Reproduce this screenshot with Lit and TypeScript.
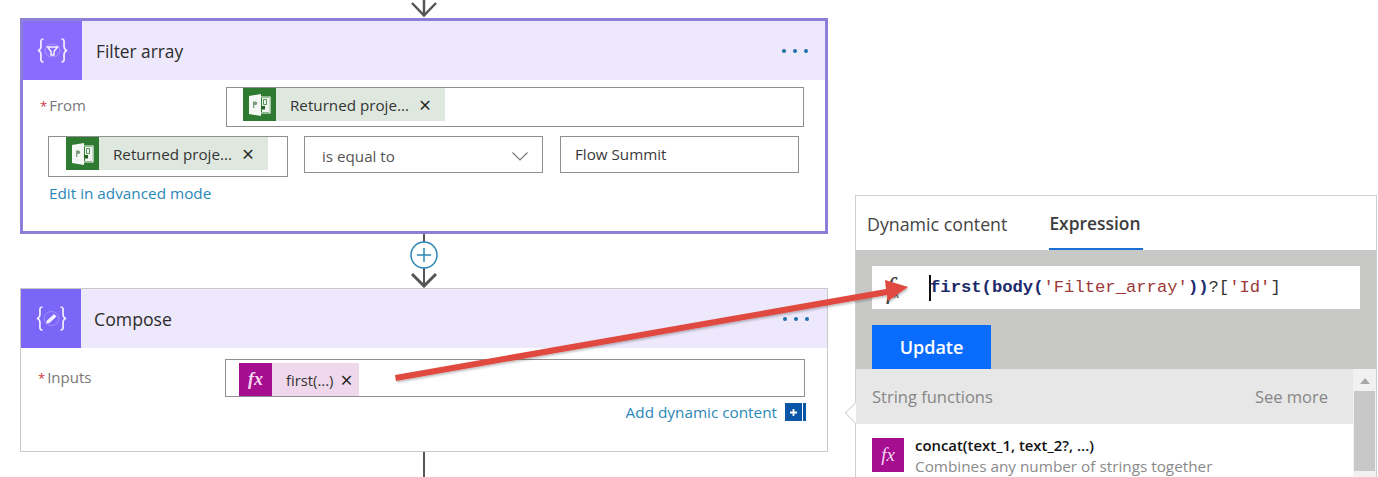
import { LitElement, html, css, svg } from "lit";
import { customElement } from "lit/decorators.js";

const braces = (inner: unknown) => html`<svg viewBox="0 0 31 25" width="31" height="25" fill="none" stroke="#f4f0ff" stroke-width="1.700">
  <path d="M6.500 1 C3 1 4 4 4 7.500 C4 10.500 3.500 12 1 12.500 C3.500 13 4 14.500 4 17.500 C4 21 3 24 6.500 24"/>
  <path d="M24.500 1 C28 1 27 4 27 7.500 C27 10.500 27.500 12 30 12.500 C27.500 13 27 14.500 27 17.500 C27 21 28 24 24.500 24"/>
  ${inner}
</svg>`;

const projectIcon = html`<svg viewBox="0 0 24 22" width="24" height="22">
  <path d="M1 2 L13 0 V22 L1 20 Z" fill="#f4f7f3"/>
  <path d="M13 3 H22 V19 H13" fill="#2f7a31" stroke="#f4f7f3" stroke-width="1.200"/>
  <rect x="14" y="4" width="7.500" height="14" fill="#eef3ee"/>
  <path d="M5 7.500 h2.500 a1.700 1.700 0 0 1 0 3.600 h-1.200 v3 h-1.300z" fill="#7f9a80"/>
  <path d="M15.500 5.500 h3 v5 h-3z" fill="#eef3ee" stroke="#2f7a31" stroke-width=".8"/>
  <rect x="13.500" y="12" width="3.500" height="3.500" fill="#24612a"/>
</svg>`;

@customElement("app-root")
export class AppRoot extends LitElement {
  static styles = css`
    :host {
      display: block;
      position: relative;
      width: 1378px;
      height: 477px;
      overflow: hidden;
      background: #fff;
      font-family: "Open Sans", "Noto Sans", sans-serif;
      color: #333;
    }
    .page { display: flex; align-items: flex-start; }
    .left { width: 808px; margin-left: 20px; flex: none; }
    .connector { display: block; }
    .card { box-sizing: border-box; background: #fff; width: 808px; }
    .card.filter { height: 216px; border: 3px solid #8c7fd8; }
    .card.compose { height: 164px; border: 1px solid #c9c9c9; }
    .head { display: flex; align-items: center; background: #ede8fc; height: 59px; }
    .head .ic { width: 59px; height: 59px; display: flex; align-items: center; justify-content: center; background: #8a6cff; flex: none; }
    .compose .head .ic { width: 60px; background: #7b66f8; }
    .head .title { margin-left: 14px; flex: 1; font-size: 17.3px; color: #2c2c2c; padding-top: 1px; }
    .compose .head .title { margin-left: 13px; font-size: 17.7px; padding-top: 0; }
    .dots { display: flex; gap: 7px; margin-right: 17px; }
    .compose .dots { margin-right: 18px; }
    .dots i { width: 4px; height: 4px; border-radius: 50%; background: #1f6fa8; }
    .row { display: flex; align-items: flex-start; }
    .label { width: 186px; padding-left: 17px; flex: none; font-size: 15px; line-height: 20px; color: #777; }
    .label b { color: #d0343c; font-weight: 400; font-size: 13px; margin-right: 2px; }
    .filter .r1 { margin-top: 7px; }
    .filter .r1 .label { padding-top: 8px; }
    .filter .r2 { margin-top: 9px; padding-left: 25px; gap: 16px; }
    .compose .r1 { margin-top: 11px; }
    .compose .r1 .label { width: 187px; padding-top: 8px; }
    .box { box-sizing: border-box; border: 1px solid #8f8f8f; background: #fff; display: flex; align-items: flex-start; }
    .from { width: 578px; height: 40px; padding-left: 16px; }
    .left-field { width: 240px; height: 41px; padding-left: 17px; }
    .select, .value { width: 239px; height: 37px; font-size: 15.2px; align-items: center; padding: 0 14px 0 17px; justify-content: space-between; color: #555; }
    .select span { padding-top: 2px; }
    .select svg { margin-top: 4px; }
    .value { margin-left: 1px; padding: 0 14px 2px; color: #3a3a3a; }
    .inputs { width: 580px; height: 38px; padding: 3px 0 0 13px; }
    .token { display: flex; align-items: center; height: 33px; background: #dfe8df; font-size: 15.2px; color: #333; white-space: nowrap; }
    .from .token, .left-field .token { width: 202px; }
    .token .tic { width: 33px; height: 100%; background: #2f7a31; display: flex; align-items: center; justify-content: center; flex: none; }
    .token .txt { margin-left: 14px; }
    .token .x { margin-left: 10px; font-size: 21px; line-height: 1; padding-top: 2px; color: #222; }
    .token.fx { background: #f0d8ec; width: 120px; }
    .token.fx .tic { background: #a50e8f; }
    .token.fx .txt { font-size: 14.8px; margin-left: 14px; }
    .token.fx .x { margin-left: 7px; }
    .fxt { font-family: "Liberation Serif", serif; font-style: italic; font-weight: 700; color: #f7d8f2; font-size: 18px; }
    .ico .fxt { font-weight: 400; font-size: 19px; }
    .link { color: #2b88b8; font-size: 15.3px; line-height: 20px; }
    .filter .link { margin: 6px 0 0 26px; }
    .add { display: flex; justify-content: flex-end; align-items: center; gap: 8px; margin-top: 5px; padding-right: 21px; }
    .plus { display: flex; }
    .plus .main { width: 17px; height: 18px; background: #0b55a8; display: flex; align-items: center; justify-content: center; }
    .plus .bar { width: 3px; height: 18px; margin-left: 1px; background: #0b55a8; }
    .right { margin: 195px 0 0 27px; width: 522px; flex: none; }
    .panel { position: relative; box-sizing: border-box; width: 522px; height: 282px; border: 1px solid #cfcfcf; border-bottom: none; background: #fff; }
    .tabs { display: flex; height: 54px; padding-left: 11px; font-size: 17.8px; color: #444; }
    .tab { display: flex; align-items: center; padding-top: 2px; box-sizing: border-box; height: 54px; }
    .tab.active { margin-left: 42px; font-size: 17.4px; font-weight: 600; color: #3c3c3c; border-bottom: 2px solid #1a6fd4; width: 94px; white-space: nowrap; }
    .editor { position: relative; background: #c8c9c7; height: 119px; padding: 16px 16px 0; box-sizing: border-box; }
    .expr { display: flex; align-items: center; height: 43px; background: #fff; width: 488px; }
    .expr .f { width: 57px; flex: none; padding: 7px 0 0 14px; box-sizing: border-box; font-family: "Liberation Serif", serif; font-style: italic; font-size: 29px; line-height: 30px; color: #444; }
    .expr .f small { font-size: 12px; }
    .code { font-family: "Liberation Mono", monospace; font-size: 17.2px; white-space: pre; color: #333; border-left: 2px solid #111; line-height: 26px; }
    .code b { color: #1b2a6b; margin-left: -1px; }
    .code b + span + b { margin-left: 0; }
    .code span { color: #9c3a3a; }
    .update { margin-top: 16px; width: 119px; height: 44px; box-sizing: border-box; background: #0a6cff; color: #fff; font-weight: 600; font-size: 18px; display: flex; align-items: center; justify-content: center; }
    .listwrap { position: relative; display: flex; }
    .list { flex: 1; min-width: 0; background: #fff; }
    .lhead { display: flex; justify-content: space-between; align-items: center; height: 55px; background: #e6e7e6; padding: 0 25px 0 16px; font-size: 16.5px; color: #868686; }
    .item { display: flex; gap: 11px; padding: 14px 16px 0; }
    .item .ico { width: 32px; height: 34px; background: #a50e8f; display: flex; align-items: center; justify-content: center; flex: none; }
    .item .t { font-size: 14.9px; font-weight: 600; color: #111; line-height: 20px; margin-top: -3px; }
    .item .d { font-size: 15.3px; color: #8a8a8a; line-height: 20px; margin-top: 1px; white-space: nowrap; }
    .scroll { width: 23px; background: #f1f1f1; display: flex; flex-direction: column; align-items: center; height: 108px; flex: none; }
    .scroll .up { width: 0; height: 0; border: 5px solid transparent; border-top: 0; border-bottom: 6px solid #a8a8a8; margin: 9px 0 7px; }
    .scroll .thumb { width: 21px; height: 80px; background: #c8c8c8; }
    .beak { position: absolute; left: -8px; top: 209px; width: 16px; height: 16px; background: #fff; border-left: 1px solid #d4d4d4; border-bottom: 1px solid #d4d4d4; transform: rotate(45deg); box-sizing: border-box; }
    .overlay { position: absolute; left: 0; top: 0; pointer-events: none; }
  `;

  private token(label: string) {
    return html`<div class="token"><div class="tic">${projectIcon}</div><span class="txt">${label}</span><span class="x">×</span></div>`;
  }

  private dots() {
    return html`<div class="dots"><i></i><i></i><i></i></div>`;
  }

  render() {
    const funnel = svg`<ellipse cx="15.500" cy="12.500" rx="7.500" ry="6.500" stroke-width=".6" opacity=".5"/><path d="M10.500 9 H20.500 L17 13.500 V17 L14 17 V13.500 Z" stroke-width="1.500"/>`;
    const pencil = svg`<ellipse cx="15.500" cy="12.500" rx="7.500" ry="7" stroke-width=".6" opacity=".5"/><path d="M10 17.500 L11 14.500 L18 8 L20.500 10.500 L13.500 17 Z" fill="#f4f0ff" stroke="none"/>`;
    return html`
      <div class="page">
        <div class="left">
          <svg class="connector" width="808" height="18" viewBox="0 0 808 18" fill="none" stroke="#555" stroke-width="2.500">
            <path d="M404 0 V16"/><path d="M392 3 L404 15.500 L416 3"/>
          </svg>
          <section class="card filter">
            <div class="head">
              <div class="ic">${braces(funnel)}</div>
              <div class="title">Filter array</div>
              ${this.dots()}
            </div>
            <div class="row r1">
              <div class="label"><b>*</b>From</div>
              <div class="box from">${this.token("Returned proje...")}</div>
            </div>
            <div class="row r2">
              <div class="box left-field">${this.token("Returned proje...")}</div>
              <div class="box select"><span>is equal to</span>
                <svg width="16" height="9" viewBox="0 0 16 9" fill="none" stroke="#777" stroke-width="1.200"><path d="M.5 .5 L8 8 L15.500 .5"/></svg>
              </div>
              <div class="box value">Flow Summit</div>
            </div>
            <div class="link">Edit in advanced mode</div>
          </section>
          <svg class="connector" width="808" height="54" viewBox="0 0 808 54" fill="none">
            <path d="M404 0 V52" stroke="#555" stroke-width="2"/>
            <path d="M392 40 L404 52 L416 40" stroke="#555" stroke-width="3"/>
            <circle cx="404" cy="21" r="13" fill="#fff" stroke="#2b88b8" stroke-width="1.500"/>
            <path d="M397 21 H411 M404 14 V28" stroke="#2b88b8" stroke-width="1.500"/>
          </svg>
          <section class="card compose">
            <div class="head">
              <div class="ic">${braces(pencil)}</div>
              <div class="title">Compose</div>
              ${this.dots()}
            </div>
            <div class="row r1">
              <div class="label"><b>*</b>Inputs</div>
              <div class="box inputs">
                <div class="token fx"><div class="tic"><span class="fxt">fx</span></div><span class="txt">first(...)</span><span class="x">×</span></div>
              </div>
            </div>
            <div class="add">
              <span class="link">Add dynamic content</span>
              <div class="plus">
                <div class="main"><svg width="9" height="9" viewBox="0 0 9 9"><path d="M4.500 1 V8 M1 4.500 H8" stroke="#fff" stroke-width="1.800"/></svg></div>
                <div class="bar"></div>
              </div>
            </div>
          </section>
          <svg class="connector" width="808" height="25" viewBox="0 0 808 25"><path d="M404 0 V25" stroke="#555" stroke-width="2"/></svg>
        </div>
        <div class="right">
          <aside class="panel">
            <div class="beak"></div>
            <div class="tabs">
              <div class="tab">Dynamic content</div>
              <div class="tab active">Expression</div>
            </div>
            <div class="editor">
              <div class="expr">
                <div class="f">f<small>x</small></div>
                <div class="code"><b>first(body(</b><span>'Filter_array'</span><b>))</b>?[<span>'Id'</span>]</div>
              </div>
              <div class="update">Update</div>
            </div>
            <div class="listwrap">
              <div class="list">
                <div class="lhead"><span>String functions</span><span>See more</span></div>
                <div class="item">
                  <div class="ico"><span class="fxt">fx</span></div>
                  <div>
                    <div class="t">concat(text_1, text_2?, ...)</div>
                    <div class="d">Combines any number of strings together</div>
                  </div>
                </div>
              </div>
              <div class="scroll"><div class="up"></div><div class="thumb"></div></div>
            </div>
          </aside>
        </div>
      </div>
      <svg class="overlay" width="1378" height="477" viewBox="0 0 1378 477">
        <defs><filter id="sh" x="-5%" y="-20%" width="110%" height="140%"><feDropShadow dx="1" dy="1.500" stdDeviation="1.200" flood-color="#000" flood-opacity=".28"/></filter></defs>
        <path d="M395 375 L886 289 L885 280 L908 287 L888 301 L887 295 L396 381 Z" fill="#e0483f" filter="url(#sh)"/>
      </svg>
    `;
  }
}
